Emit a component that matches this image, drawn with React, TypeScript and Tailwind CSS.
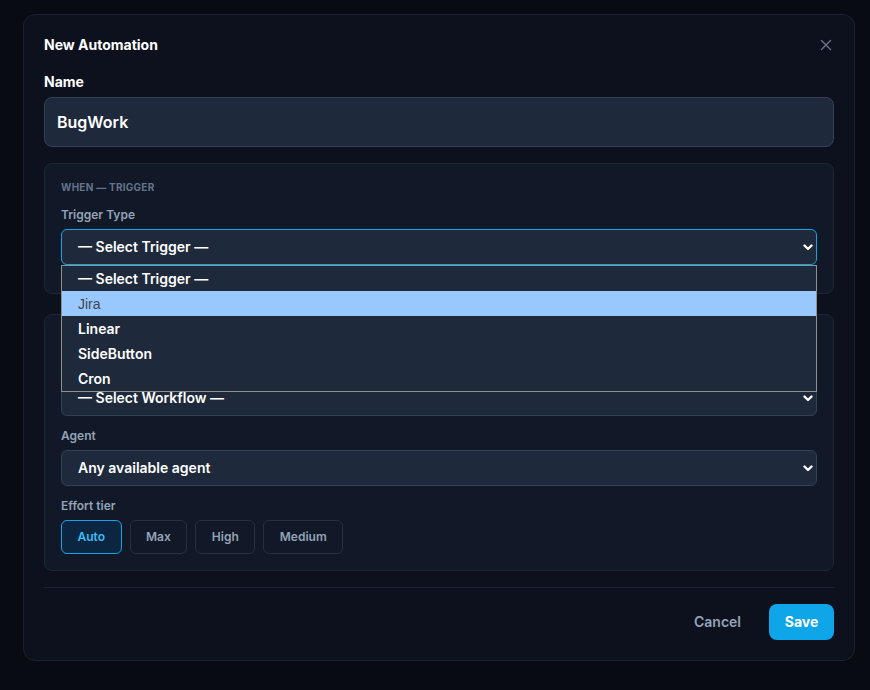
import React from 'react';

const triggerOptions = ['— Select Trigger —', 'Jira', 'Linear', 'SideButton', 'Cron'];
const tiers = ['Auto', 'Max', 'High', 'Medium'];

function Chevron() {
  return (
    <svg width="10" height="7" viewBox="0 0 10 7" className="shrink-0">
      <path d="M1.5 1.5 L5 5 L8.5 1.5" fill="none" stroke="#ffffff" strokeWidth="2.4" strokeLinecap="round" strokeLinejoin="round" />
    </svg>
  );
}

function FakeSelect({ value, focused }: { value: string; focused?: boolean }) {
  return (
    <div
      className={`flex h-[36px] items-center justify-between rounded-md border bg-[#1e293b] pl-4 pr-[3px] text-sm font-semibold text-white ${
        focused ? 'border-[#0ea5e9]' : 'border-[#334155]'
      }`}
    >
      <span>{value}</span>
      <Chevron />
    </div>
  );
}

export default function App() {
  return (
    <div className="h-[690px] w-[870px] bg-[#080b12] pl-[23px] pt-[14px] font-['Inter',sans-serif]">
      <div className="flex h-[647px] w-[832px] flex-col rounded-xl border border-[#1a2130] bg-[#0c111d] px-5 pt-5">
        {/* Header */}
        <div className="flex items-center justify-between">
          <h2 className="text-sm font-bold text-white">New Automation</h2>
          <svg width="12" height="12" viewBox="0 0 12 12" className="mr-[2px]">
            <path d="M1.5 1.5 L10.5 10.5 M10.5 1.5 L1.5 10.5" stroke="#64748b" strokeWidth="1.4" strokeLinecap="round" />
          </svg>
        </div>

        {/* Name */}
        <label className="mt-[17px] text-sm font-bold text-white">Name</label>
        <div className="mt-[5px] flex h-[50px] items-center rounded-lg border border-[#334155] bg-[#1e293b] px-3 text-base font-semibold text-white">
          BugWork
        </div>

        {/* When — trigger */}
        <div className="mt-4 rounded-lg border border-[#1e2533] bg-[#111827] px-4 pb-[28px] pt-4">
          <div className="text-[10px] font-bold uppercase leading-[15px] tracking-wide text-[#64748b]">When — Trigger</div>
          <div className="mt-3 text-xs font-semibold leading-4 text-[#94a3b8]">Trigger Type</div>
          <div className="relative mt-[6px]">
            <FakeSelect value="— Select Trigger —" focused />
            {/* open dropdown list */}
            <div className="absolute left-0 right-0 top-full z-10 border border-[#8f8f8f] bg-[#1e293b]">
              {triggerOptions.map((opt) =>
                opt === 'Jira' ? (
                  <div key={opt} className="flex h-[25px] items-center bg-[#99c8ff] pl-4 font-['Liberation_Sans',sans-serif] text-sm text-[#40454e]">
                    {opt}
                  </div>
                ) : (
                  <div key={opt} className="flex h-[25px] items-center pl-4 text-sm font-semibold text-white">
                    {opt}
                  </div>
                )
              )}
            </div>
          </div>
        </div>

        {/* Then — action */}
        <div className="mt-5 rounded-lg border border-[#1e2533] bg-[#111827] px-4 pb-4 pt-4">
          <div className="text-[10px] font-bold uppercase leading-[15px] tracking-wide text-[#64748b]">Then — Action</div>
          <div className="mt-[11px] text-xs font-semibold leading-4 text-[#94a3b8]">Workflow</div>
          <div className="mt-[7px]">
            <FakeSelect value="— Select Workflow —" />
          </div>

          <div className="mt-3 text-xs font-semibold leading-4 text-[#94a3b8]">Agent</div>
          <div className="mt-1.5">
            <FakeSelect value="Any available agent" />
          </div>

          <div className="mt-3 text-xs font-semibold leading-4 text-[#94a3b8]">Effort tier</div>
          <div className="mt-[6px] flex gap-2">
            {tiers.map((t) => (
              <button
                key={t}
                className={`h-[34px] rounded-md border px-[15.5px] text-xs font-semibold ${
                  t === 'Auto'
                    ? 'border-[#0ea5e9] bg-[#0c2540] text-[#38bdf8]'
                    : 'border-[#263041] bg-transparent text-[#94a3b8]'
                }`}
              >
                {t}
              </button>
            ))}
          </div>
        </div>

        {/* Footer */}
        <div className="mt-4 border-t border-[#1a2130] pt-4">
          <div className="flex items-center justify-end gap-3">
            <button className="h-9 px-4 text-sm font-semibold text-[#94a3b8]">Cancel</button>
            <button className="h-9 w-[65px] rounded-lg bg-[#0ea5e9] text-sm font-bold text-white">Save</button>
          </div>
        </div>
      </div>
    </div>
  );
}
